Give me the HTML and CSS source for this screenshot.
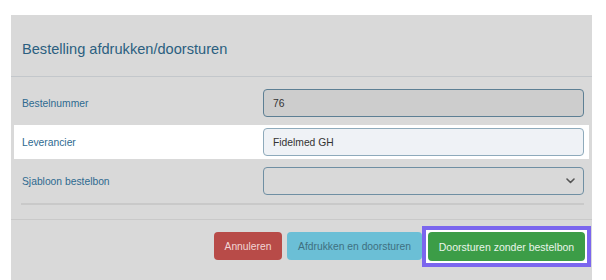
FILE: index.html
```html
<!DOCTYPE html>
<html lang="nl">
<head>
<meta charset="utf-8">
<title>Bestelling afdrukken/doorsturen</title>
<link rel="stylesheet" href="styles.css">
</head>
<body>
<div class="panel">
  <div class="header">
    <h1 class="title">Bestelling afdrukken/doorsturen</h1>
  </div>
  <div class="body">
    <div class="row">
      <label class="label">Bestelnummer</label>
      <div class="field disabled">76</div>
    </div>
    <div class="row active">
      <label class="label">Leverancier</label>
      <div class="field light">Fidelmed GH</div>
    </div>
    <div class="row">
      <label class="label">Sjabloon bestelbon</label>
      <div class="field select">
        <span></span>
        <svg class="chev" width="9" height="6" viewBox="0 0 9 6"><polyline points="1,1 4.5,4.5 8,1" fill="none" stroke="#555" stroke-width="1.6" stroke-linecap="round" stroke-linejoin="round"/></svg>
      </div>
    </div>
    <div class="rule"></div>
  </div>
  <div class="footer">
    <button class="btn danger">Annuleren</button>
    <button class="btn info">Afdrukken en doorsturen</button>
    <span class="focus-ring"><button class="btn success">Doorsturen zonder bestelbon</button></span>
  </div>
</div>
</body>
</html>
```

FILE: styles.css
```css
html, body {
  margin: 0;
  padding: 0;
  background: #ffffff;
  font-family: "Liberation Sans", Arial, sans-serif;
}

.panel {
  margin: 15px 0 0 11px;
  width: 581px;
  height: 265px;
  background: #d9d9d9;
  display: flex;
  flex-direction: column;
}

.header {
  height: 62px;
  border-bottom: 1px solid #c3c7cb;
  display: flex;
  align-items: center;
  padding-left: 11px;
  padding-top: 6px;
  box-sizing: border-box;
}

.title {
  margin: 0;
  font-size: 14.6px;
  font-weight: normal;
  color: #2b5f80;
}

.body {
  padding-top: 9px;
}

.row {
  display: grid;
  grid-template-columns: 241px 321px;
  align-items: center;
  height: 34px;
  margin: 0 3px 5px 3px;
  padding-left: 8px;
  box-sizing: border-box;
}

.row.active {
  background: #ffffff;
}

.label {
  font-size: 10.3px;
  color: #2e6a90;
}

.field {
  height: 28px;
  box-sizing: border-box;
  border: 1.5px solid #6f8fa3;
  border-radius: 4px;
  padding: 0 9px;
  font-size: 10.3px;
  color: #333333;
  display: flex;
  align-items: center;
}

.field.disabled {
  background: #cdcdcd;
  border-color: #5d7f94;
}

.field.light {
  background: #eff2f6;
  border-color: #8eaabb;
}

.field.select {
  background: #d9d9d9;
  justify-content: space-between;
  padding-right: 8px;
}

.chev {
  display: block;
}

.rule {
  height: 2px;
  background: #c9c9c9;
  margin: 2px 8px 0 10px;
}

.footer {
  margin-top: 14px;
  border-top: 1px solid #c9c9c9;
  display: flex;
  justify-content: flex-end;
  align-items: flex-start;
  padding: 6px 1px 0 0;
}

.btn {
  height: 28px;
  border: none;
  border-radius: 4px;
  font-family: "Liberation Sans", Arial, sans-serif;
  font-size: 10.3px;
  padding: 0 10px;
  margin-top: 6px;
}

.danger {
  background: #b84b48;
  color: #f1d5d4;
  width: 68px;
  margin-right: 5px;
}

.info {
  background: #6bbfd6;
  color: #3f6f80;
  width: 135px;
}

.focus-ring {
  display: flex;
  background: #ffffff;
  border: 4px solid #7b66ee;
  padding: 2px;
}

.success {
  background: #3c9d47;
  color: #e9f5ea;
  width: 157px;
  height: 29px;
  margin-top: 0;
  font-size: 10.5px;
}
```
